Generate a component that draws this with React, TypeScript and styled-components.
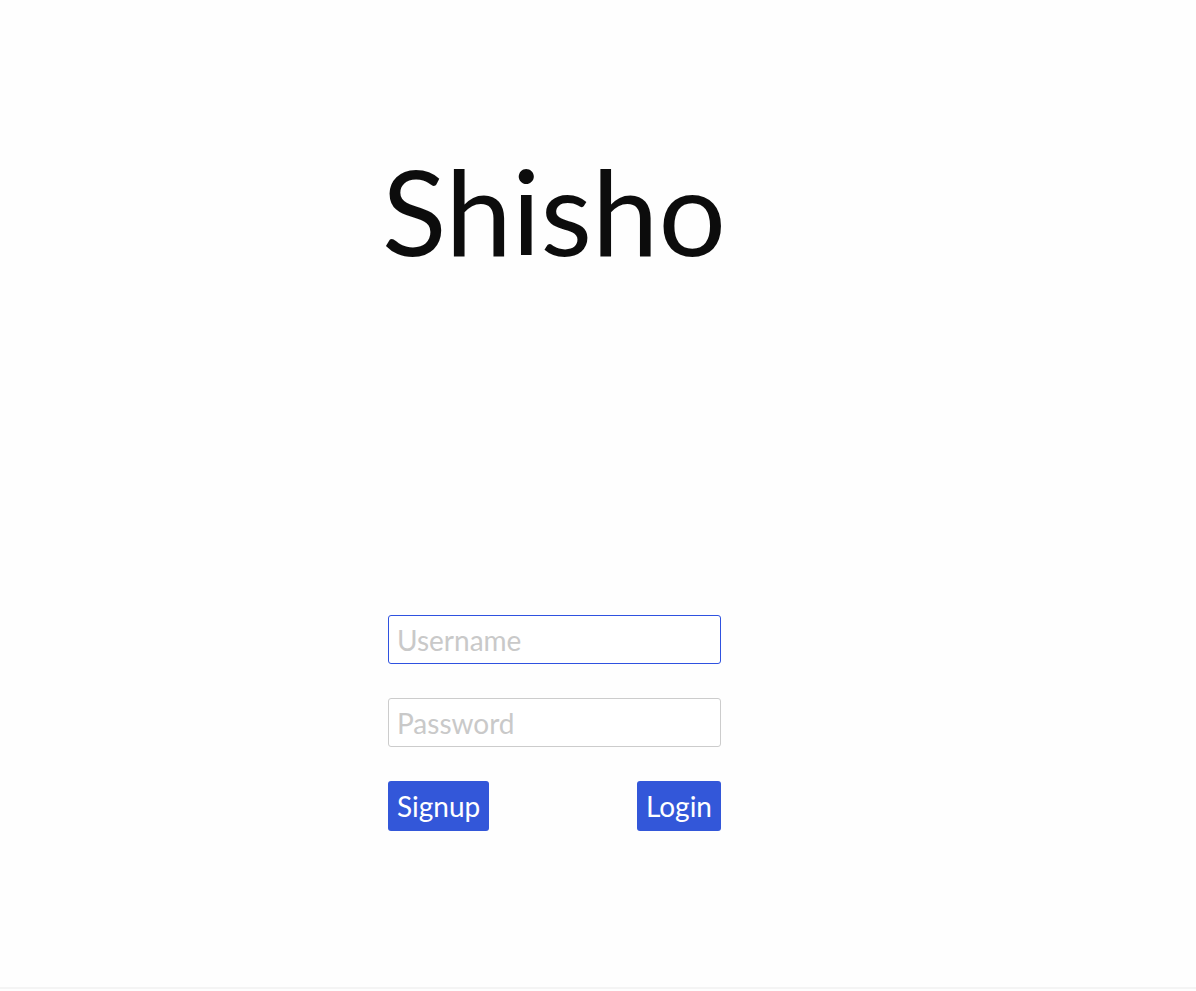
import * as React from 'react'
import styled, { createGlobalStyle } from 'styled-components'

const GlobalStyle = createGlobalStyle`
  html, body {
    margin: 0;
    padding: 0;
    background: #fefefe;
    font-family: Lato, 'Open Sans', sans-serif;
  }
`

const Page = styled.div`
  min-height: 989px;
  border-bottom: 2px solid #f4f4f4;
  display: flex;
  flex-direction: column;
  padding-left: 388px;
  box-sizing: border-box;
`

const Title = styled.h1`
  margin: 0;
  padding-top: 140px;
  margin-left: -6px;
  font-family: Lato, sans-serif;
  font-weight: 400;
  font-size: 119px;
  line-height: 140px;
  color: #0c0c0c;
`

const Form = styled.form`
  width: 333px;
  margin-top: 335px;
  display: flex;
  flex-direction: column;
  gap: 34px;
`

const Input = styled.input`
  box-sizing: border-box;
  width: 333px;
  height: 49px;
  padding: 0 8px;
  border: 1px solid #cccccc;
  border-radius: 3px;
  background: #fff;
  font-family: Lato, sans-serif;
  font-size: 28px;
  color: #222;
  outline: none;
  &::placeholder {
    color: #c9c9c9;
  }
  &:focus {
    border-color: #2f52e0;
  }
`

const ButtonRow = styled.div`
  display: flex;
  justify-content: space-between;
`

const Button = styled.button`
  height: 50px;
  padding: 0 9px;
  border: none;
  border-radius: 3px;
  background: #3357d9;
  color: #fff;
  font-family: Lato, sans-serif;
  font-size: 28px;
  cursor: pointer;
`

export default function App() {
  return (
    <>
      <GlobalStyle />
      <Page>
        <Title>Shisho</Title>
        <Form onSubmit={e => e.preventDefault()}>
          <Input type="text" placeholder="Username" autoFocus />
          <Input type="password" placeholder="Password" />
          <ButtonRow>
            <Button type="button">Signup</Button>
            <Button type="submit">Login</Button>
          </ButtonRow>
        </Form>
      </Page>
    </>
  )
}
